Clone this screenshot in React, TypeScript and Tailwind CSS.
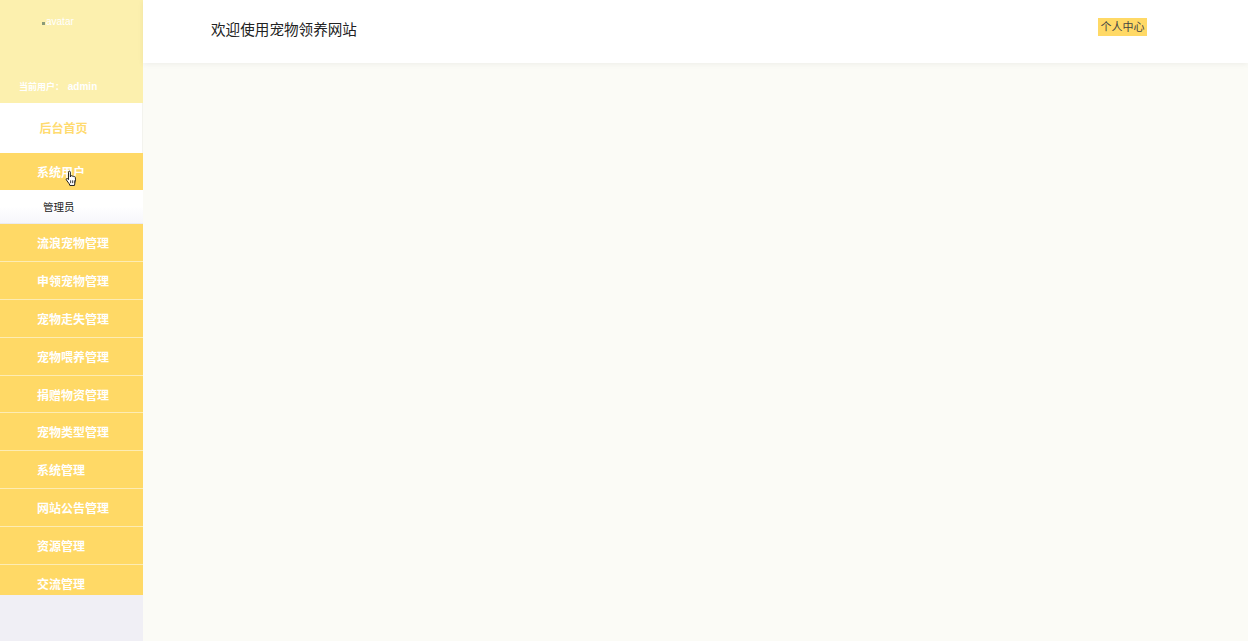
const font = "[font-family:'Liberation_Sans','Noto_Sans_CJK_SC',sans-serif]";

const menus = [
  "流浪宠物管理",
  "申领宠物管理",
  "宠物走失管理",
  "宠物喂养管理",
  "捐赠物资管理",
  "宠物类型管理",
  "系统管理",
  "网站公告管理",
  "资源管理",
  "交流管理",
];

function HandCursor() {
  return (
    <svg
      aria-hidden="true"
      width="13"
      height="17"
      viewBox="0 0 14 18"
      className="absolute left-[65px] top-[17px]"
    >
      <path
        d="M4 1.500c.7-.7 1.800-.3 1.800.7v5l.2-.9c.6-.6 1.500-.4 1.700.3.6-.5 1.500-.3 1.700.4.7-.4 1.600 0 1.700.8.4 1.700.3 3.600-.3 5.200l-.6 3.500H5.200L4.600 14.800 1.500 10.600c-.7-1 .4-2 1.300-1.400l1 1V2.300z"
        fill="#fff"
        stroke="#111"
        strokeWidth="1"
        strokeLinejoin="round"
      />
      <path d="M6 11v3M8 11v3M10 11v3" stroke="#111" strokeWidth="0.8" />
    </svg>
  );
}

function MenuRow({ label, last }: { label: string; last: boolean }) {
  return (
    <div
      className={`h-[37.8px] shrink-0 bg-[#ffd966] pl-[37px] text-[12px] font-bold leading-[41px] text-white ${
        last ? "" : "border-b border-[#fdecb4]"
      }`}
    >
      {label}
    </div>
  );
}

export default function App() {
  return (
    <div className={`flex h-screen overflow-hidden bg-[#fbfbf6] ${font}`}>
      <aside className="flex w-[143px] shrink-0 flex-col bg-[#f0eff5]">
        <div className="flex h-[103px] shrink-0 flex-col bg-[#fcf0ae] text-white">
          <div className="flex h-[44px] items-center pl-[42px] text-[10px] leading-none">
            <span className="mt-[2px] h-[3px] w-[3px] bg-[#8a9a78]" />
            <span className="ml-[1px]">avatar</span>
          </div>
          <div className="mt-[34px] whitespace-pre pl-[19px] text-[9px] font-bold leading-[17px]">
            当前用户：<span className="ml-[1px] text-[10px]"> admin</span>
          </div>
        </div>

        <div className="flex h-[50px] shrink-0 items-center justify-center border-r border-[#f3f3ee] bg-white pt-[1px] pr-[17px] pl-[2px] text-[12px] font-bold text-[#ffdb70]">
          后台首页
        </div>

        <div className="relative h-[37px] shrink-0 bg-[#ffd966] pl-[37px] text-[12px] font-bold leading-[41px] text-white">
          系统用户
          <HandCursor />
        </div>

        <div className="h-[34.4px] shrink-0 border-b border-[#ecebef] bg-gradient-to-b from-white from-50% to-[#f6f6fb] pl-[43px] text-[10.5px] leading-[35px] text-[#222]">
          管理员
        </div>

        <nav className="flex h-[370.6px] shrink-0 flex-col overflow-hidden">
          {menus.map((m, i) => (
            <MenuRow key={m} label={m} last={i === menus.length - 1} />
          ))}
        </nav>
      </aside>

      <main className="min-w-0 flex-1">
        <header className="flex h-[63px] items-start justify-between bg-white pl-[68px] pr-[101px] shadow-[0_1px_6px_rgba(0,0,0,0.06)]">
          <h1 className="mt-[20px] text-[14.6px] font-normal leading-[20px] text-[#222]">
            欢迎使用宠物领养网站
          </h1>
          <button
            type="button"
            className="mt-[18px] h-[18px] w-[49px] bg-[#ffd966] text-center text-[11px] leading-[19px] text-[#444]"
          >
            个人中心
          </button>
        </header>
      </main>
    </div>
  );
}
